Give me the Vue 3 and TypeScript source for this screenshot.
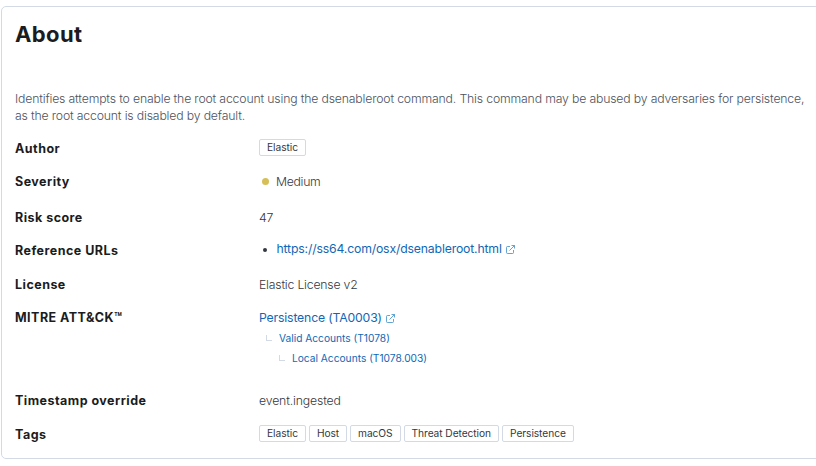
<script setup lang="ts">
interface Technique {
  label: string
  level: number
}

const description =
  'Identifies attempts to enable the root account using the dsenableroot command. This command may be abused by adversaries for persistence, as the root account is disabled by default.'
const techniques: Technique[] = [
  { label: 'Valid Accounts (T1078)', level: 1 },
  { label: 'Local Accounts (T1078.003)', level: 2 },
]
const tags: string[] = ['Elastic', 'Host', 'macOS', 'Threat Detection', 'Persistence']
</script>

<template>
  <section class="panel">
    <h2 class="title">About</h2>
    <p class="description">{{ description }}</p>
    <dl class="list">
      <dt>Author</dt>
      <dd class="badges"><span class="badge">Elastic</span></dd>

      <dt>Severity</dt>
      <dd class="severity"><span class="dot"></span><span>Medium</span></dd>

      <dt>Risk score</dt>
      <dd>47</dd>

      <dt>Reference URLs</dt>
      <dd class="reference">
        <span class="bullet"></span>
        <a class="link">https://ss64.com/osx/dsenableroot.html</a>
        <svg class="popout" viewBox="0 0 9 9"><path d="M4 1.5H1.5a1 1 0 0 0-1 1v5a1 1 0 0 0 1 1h5a1 1 0 0 0 1-1V5M5.5.5h3v3M8.5.5l-5 5" /></svg>
      </dd>

      <dt>License</dt>
      <dd class="license">Elastic License v2</dd>

      <dt>MITRE ATT&amp;CK™</dt>
      <dd class="threat">
        <div class="tactic">
          <a class="link">Persistence (TA0003)</a>
          <svg class="popout" viewBox="0 0 9 9"><path d="M4 1.5H1.5a1 1 0 0 0-1 1v5a1 1 0 0 0 1 1h5a1 1 0 0 0 1-1V5M5.5.5h3v3M8.5.5l-5 5" /></svg>
        </div>
        <div v-for="t in techniques" :key="t.label" class="technique" :class="'level-' + t.level">
          <span class="branch"></span>
          <a class="link">{{ t.label }}</a>
        </div>
      </dd>

      <dt>Timestamp override</dt>
      <dd class="timestamp">event.ingested</dd>

      <dt>Tags</dt>
      <dd class="badges">
        <span v-for="tag in tags" :key="tag" class="badge">{{ tag }}</span>
      </dd>
    </dl>
  </section>
</template>

<style>
body {
  background: #fff;
  overflow: hidden;
}
</style>

<style scoped>
.panel {
  box-sizing: border-box;
  width: 825px;
  height: 453px;
  margin: 6px 0 0 1px;
  padding: 12px 13px 0;
  border: 1px solid #d3dae6;
  border-radius: 5px;
  font-family: Inter, "Liberation Sans", sans-serif;
  font-size: 12.25px;
  line-height: 17px;
  letter-spacing: -0.2px;
  color: #343741;
}
.title {
  margin: 0;
  font-size: 22px;
  line-height: 30px;
  font-weight: 700;
  letter-spacing: 0.4px;
  color: #1a1c21;
}
.description {
  width: 800px;
  margin: 41px 0 0;
  font-weight: 300;
  letter-spacing: -0.165px;
  color: #4c525e;
}
.list {
  display: grid;
  grid-template-columns: 244px 1fr;
  grid-template-rows: 33px 36px 33px 34px 33px 83px 34px 17px;
  margin: 16px 0 0;
}
dt {
  font-size: 12.5px;
  font-weight: 650;
  letter-spacing: 0.47px;
  color: #1a1c21;
}
dd {
  margin: 0;
  font-weight: 350;
}
.link {
  font-weight: 400;
  color: #1267b5;
}
.badges {
  display: flex;
  gap: 3px;
  margin-top: -1px;
}
.badge {
  box-sizing: border-box;
  height: 17px;
  padding: 0 7px;
  border: 1px solid #d3dae6;
  border-radius: 2px;
  font-size: 10.2px;
  font-weight: 400;
  line-height: 15px;
  letter-spacing: -0.06px;
}
.severity {
  display: flex;
  gap: 7px;
  letter-spacing: -0.3px;
}
.dot {
  width: 7px;
  height: 7px;
  margin: 5px 0 0 3px;
  border-radius: 50%;
  background: #d6bf57;
}
.reference,
.tactic {
  display: flex;
}
.reference {
  margin-top: -2px;
  letter-spacing: -0.17px;
}
.license {
  letter-spacing: -0.2px;
}
.timestamp {
  letter-spacing: -0.14px;
}
.bullet {
  width: 4px;
  height: 4px;
  margin: 8px 9.5px 0 4px;
  border-radius: 50%;
  background: #343741;
}
.popout {
  width: 9px;
  height: 9px;
  margin: 5px 0 0 4px;
  fill: none;
  stroke: #3b8dc6;
  stroke-width: 0.8;
}
.technique {
  display: flex;
  height: 20px;
  font-size: 10.2px;
  line-height: 20px;
  letter-spacing: 0;
}
.tactic {
  margin-bottom: 2px;
  letter-spacing: -0.17px;
}
.level-1 {
  padding-left: 7px;
}
.level-2 {
  padding-left: 20px;
}
.branch {
  box-sizing: border-box;
  width: 6px;
  height: 6px;
  margin: 7px 7px 0 0;
  border: solid #d3dae6;
  border-width: 0 0 1px 1px;
}
</style>
